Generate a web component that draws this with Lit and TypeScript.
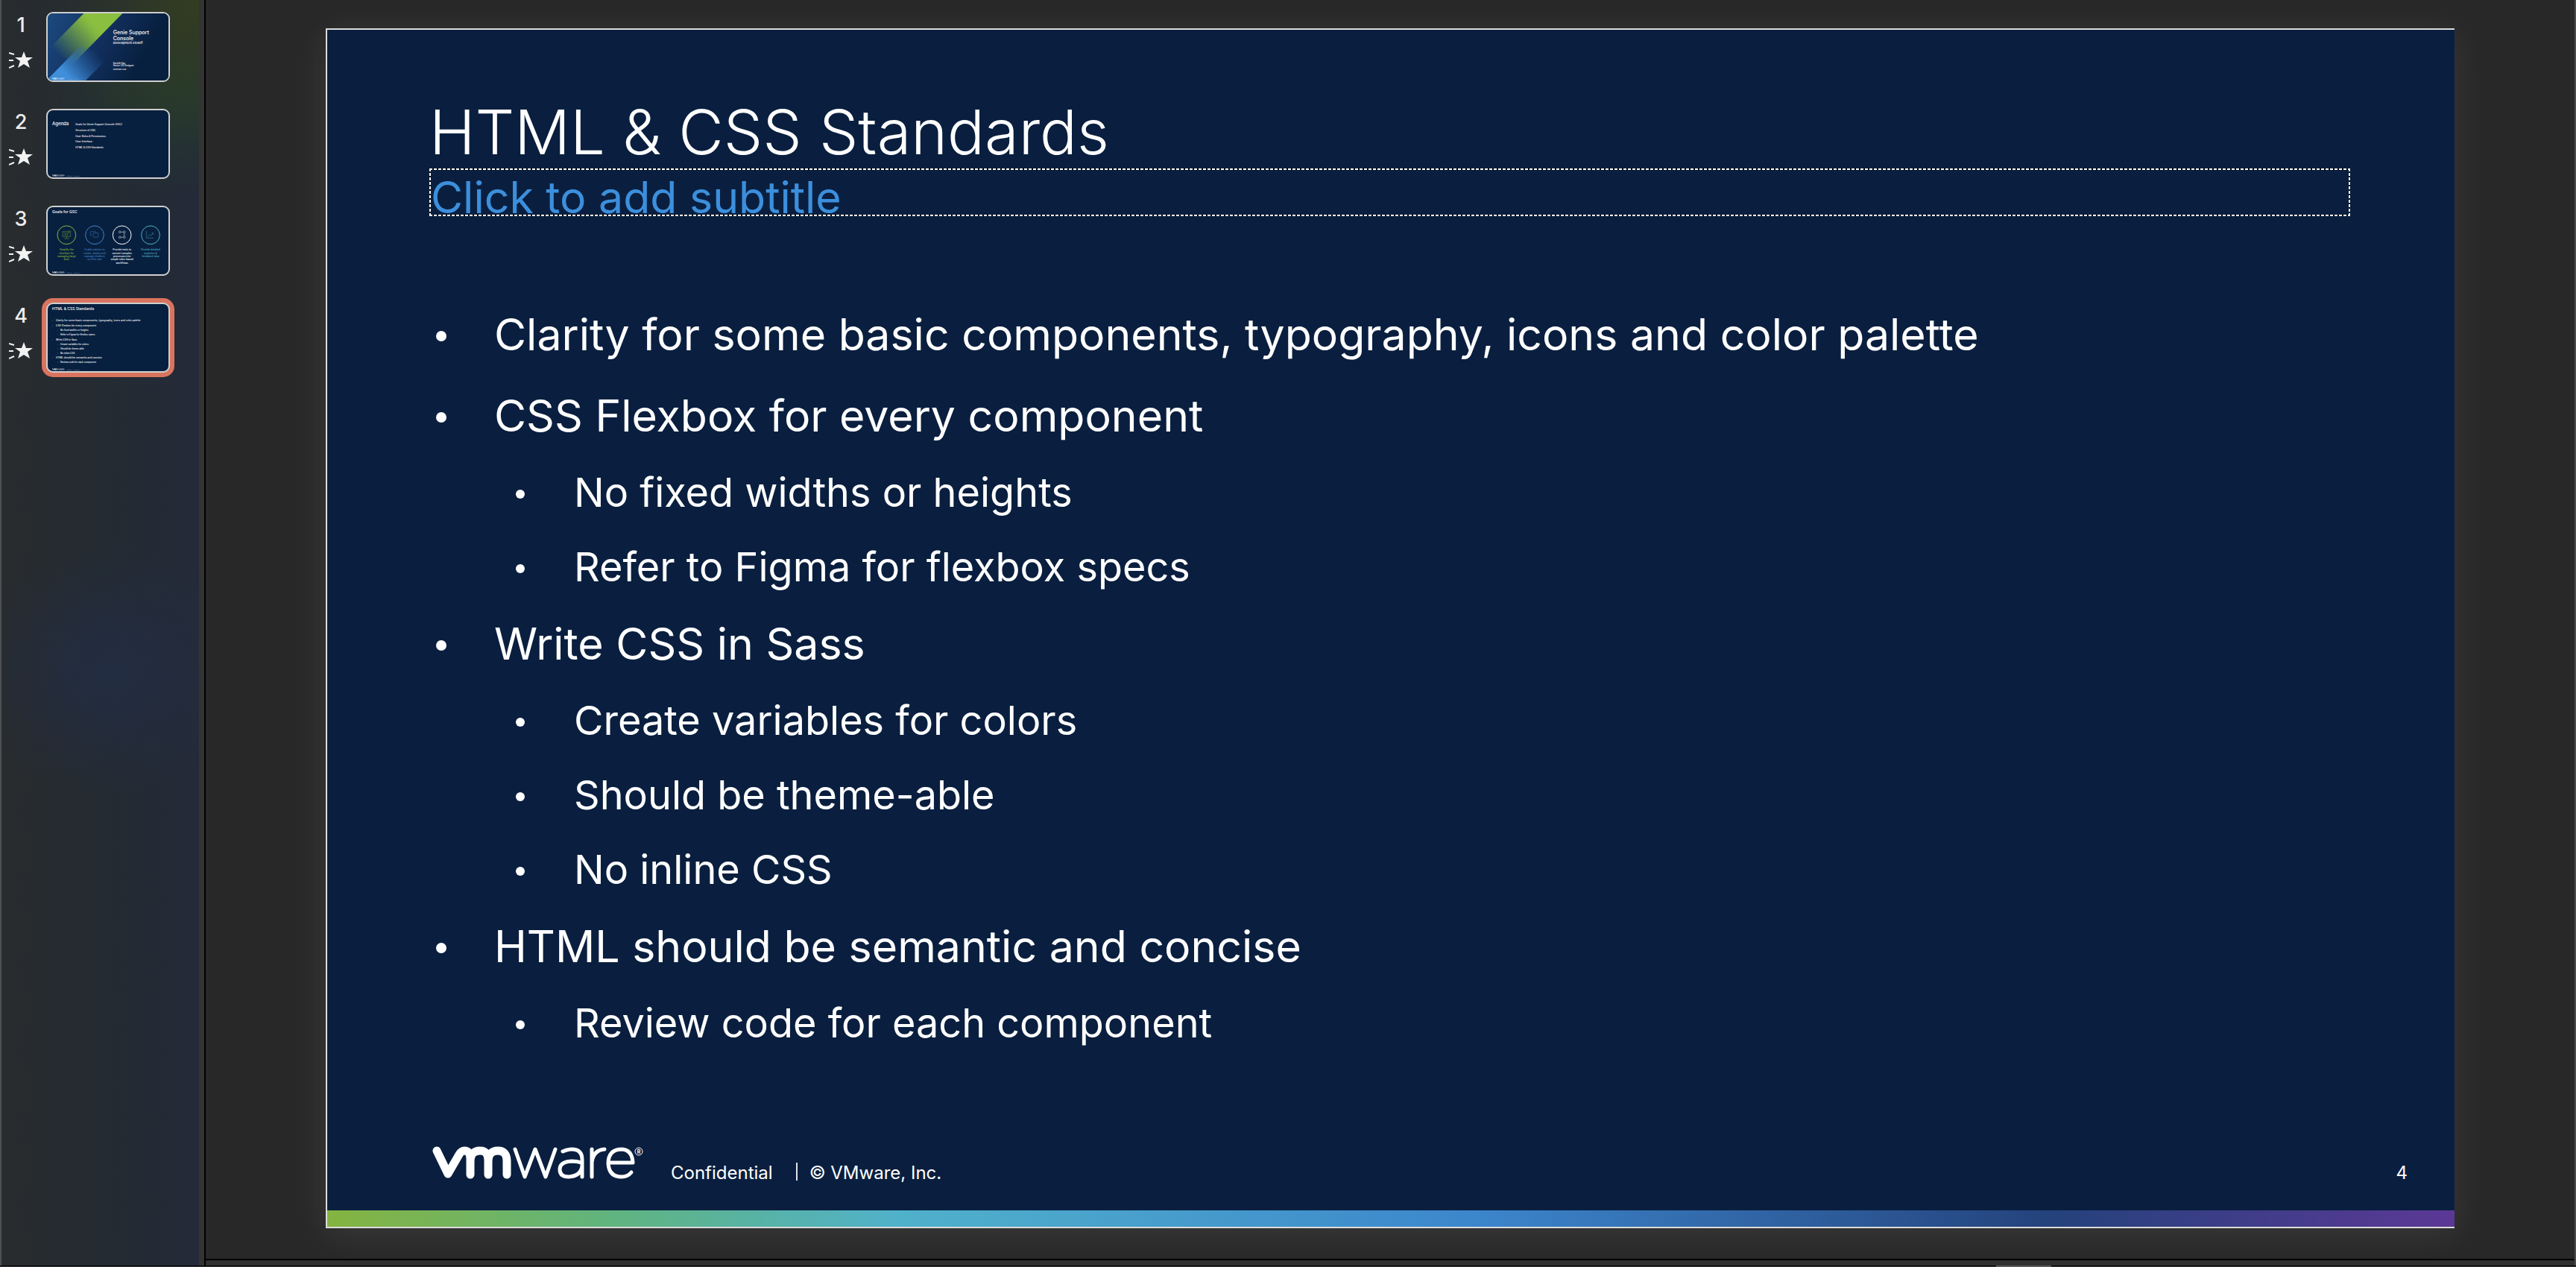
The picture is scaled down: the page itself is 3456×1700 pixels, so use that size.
import { LitElement, html, css, svg, nothing } from "lit";
import { customElement, property, state } from "lit/decorators.js";

interface Bullet {
  text: string;
  children?: string[];
}

const BULLETS: Bullet[] = [
  { text: "Clarity for some basic components, typography, icons and color palette" },
  {
    text: "CSS Flexbox for every component",
    children: ["No fixed widths or heights", "Refer to Figma for flexbox specs"],
  },
  {
    text: "Write CSS in Sass",
    children: ["Create variables for colors", "Should be theme-able", "No inline CSS"],
  },
  {
    text: "HTML should be semantic and concise",
    children: ["Review code for each component"],
  },
];

/* Strokes of the wordmark on a 286 x 52 canvas. */
const wordmark = () => svg`
  <g fill="none" stroke="#fff" stroke-linecap="round" stroke-linejoin="round">
    <path stroke-width="11" d="M7 13 L22 44 L37 18 Q40 13 44 13 Q52 13 52 24 V45 M52 28 Q52 13 65 13 Q76 13 76 26 V45 M76 28 Q76 13 89 13 Q101 13 101 27 V45"/>
    <path stroke-width="5" d="M112 11 L125 48 L139 11 L153 48 L166 11"/>
    <path stroke-width="5" d="M176 14 Q182 11 188 11 Q202 11 202 25 V48 M201 29 Q195 27 188 27 Q172 28 172 38 Q172 48 184 48 Q200 47 202 34"/>
    <path stroke-width="5" d="M215 11 V48 M215 29 Q217 12 232 11"/>
    <path stroke-width="5" d="M237 29 H270 Q269 11 254 11 Q237 12 237 30 Q238 48 255 48 Q263 48 268 42"/>
  </g>`;

const thumbFooter = () => svg`
  <svg x="18" y="257" width="52" height="10" viewBox="0 0 286 52">${wordmark()}</svg>
  <text x="75" y="266" font-size="4" fill="#8fa0b8">Confidential</text>
  <text x="103" y="266" font-size="4" fill="#8fa0b8">© VMware, Inc.</text>`;

const coverArt = () => svg`
  <defs>
    <linearGradient id="sky" x1="0" y1="0" x2="1" y2="0.3">
      <stop offset="0" stop-color="#1d4a80"/><stop offset="0.5" stop-color="#12305f"/><stop offset="0.9" stop-color="#08203f"/>
    </linearGradient>
    <linearGradient id="green" gradientUnits="userSpaceOnUse" x1="200" y1="60" x2="60" y2="185">
      <stop offset="0" stop-color="#8bbf3f"/><stop offset="0.15" stop-color="#7fb242"/><stop offset="1" stop-color="#7fb242" stop-opacity="0"/>
    </linearGradient>
    <linearGradient id="blue" gradientUnits="userSpaceOnUse" x1="80" y1="250" x2="195" y2="150">
      <stop offset="0" stop-color="#3f8fda"/><stop offset="1" stop-color="#2c6bb0" stop-opacity="0"/>
    </linearGradient>
  </defs>
  <rect width="486" height="270" fill="url(#sky)"/>
  <path d="M145 0 H301 L98 207 L10 137 Z" fill="url(#green)"/>
  <path d="M0 265 L130 132 L250 172 L153 270 H0 Z" fill="url(#blue)"/>
  <g fill="#fff">
    <text x="263" y="84" font-size="21">Genie Support</text>
    <text x="263" y="108" font-size="21">Console</text>
    <text x="263" y="123" font-size="12">Development Kickoff</text>
    <text x="263" y="204" font-size="9">Karthik Das</text>
    <text x="263" y="213" font-size="9">Senior UX Designer</text>
    <text x="263" y="228" font-size="7">November 2019</text>
  </g>`;

const agendaArt = () => {
  const rows: [number, string][] = [
    [60, "Goals for Genie Support Console (GSC)"],
    [84, "Structure of GSC"],
    [108, "User Roles & Permissions"],
    [129, "User Interface"],
    [153, "HTML & CSS Standards"],
  ];
  return svg`
    <g fill="#fff">
      <text x="18" y="60" font-size="18">Agenda</text>
      ${rows.map(([y, t]) => svg`<text x="112" y=${y} font-size="10">${t}</text>`)}
    </g>`;
};

const goalsArt = () => {
  const goals: [number, string, string[]][] = [
    [76, "#86b93f", ["Simplify the", "interface for", "managing large", "bots"]],
    [189, "#3d84cc", ["Enable admins to", "create, deploy and", "manage chatbots", "on their own"]],
    [299, "#ffffff", ["Provide tools to", "convert complex", "processes into", "simple rules-based", "workflows"]],
    [414, "#4fb0c6", ["Provide detailed", "analytics &", "feedback data"]],
  ];
  return svg`
    <text x="18" y="24" font-size="15" fill="#fff">Goals for GSC</text>
    ${goals.map(
      ([x, color, lines]) => svg`
        <circle cx=${x} cy="112" r="37" fill="none" stroke=${color} stroke-width="3"/>
        <g fill=${color} font-size="10" text-anchor="middle">
          ${lines.map((t, i) => svg`<text x=${x} y=${175 + i * 13}>${t}</text>`)}
        </g>`
    )}
    <g fill="none" stroke-width="2">
      <g stroke="#5f8a3a">
        <path d="M60 98 H84 M92 108 V118 H60 V98 M76 118 V126 M66 126 H86 M84 96 H92 V104 H84 Z M64 104 H70 M64 112 H70"/>
        <circle cx="76" cy="108" r="5"/>
      </g>
      <path stroke="#2d62a0" d="M178 114 H172 V98 H193 V104 M183 104 H204 V120 H198 L194 124 V120 H183 Z"/>
      <g stroke="#c3ccd8">
        <circle cx="290" cy="100" r="4"/><circle cx="308" cy="100" r="4"/>
        <circle cx="290" cy="121" r="4"/><circle cx="308" cy="121" r="4"/>
        <path d="M294 100 H304 M308 104 V117 M294 121 H304"/>
      </g>
      <path stroke="#3c8098" d="M397 96 V124 H426 M402 118 L411 111 L416 114 L425 104 M419 104 H425 V110"/>
    </g>`;
};

const standardsArt = () => {
  const rows: [number, number, string][] = [
    [0, 69, "Clarity for some basic components, typography, icons and color palette"],
    [0, 90, "CSS Flexbox for every component"],
    [1, 108, "No fixed widths or heights"],
    [1, 126, "Refer to Figma for flexbox specs"],
    [0, 147, "Write CSS in Sass"],
    [1, 165, "Create variables for colors"],
    [1, 183, "Should be theme-able"],
    [1, 201, "No inline CSS"],
    [0, 219, "HTML should be semantic and concise"],
    [1, 237, "Review code for each component"],
  ];
  return svg`
    <g fill="#fff">
      <text x="18" y="24" font-size="15">HTML &amp; CSS Standards</text>
      ${rows.map(
        ([level, y, t]) => svg`
          <circle cx=${20 + level * 20} cy=${y - 3} r="1"/>
          <text x=${33 + level * 18} y=${y} font-size=${level ? 9 : 10}>${t}</text>`
      )}
    </g>`;
};

const SLIDES = [
  { title: "Genie Support Console", art: coverArt },
  { title: "Agenda", art: agendaArt },
  { title: "Goals for GSC", art: goalsArt },
  { title: "HTML & CSS Standards", art: standardsArt },
];

@customElement("slide-navigator")
export class SlideNavigator extends LitElement {
  @property({ type: Number }) current = 4;

  static styles = css`
    :host {
      display: block;
      box-sizing: border-box;
      border-left: 2px solid #4d5154;
      border-right: 2px solid #000;
      background: #333;
      padding-right: 7px;
    }
    .panel {
      min-height: 100%;
      box-sizing: border-box;
      padding-top: 16px;
      background:
        radial-gradient(ellipse 200px 200px at 100% 0, #333d20 0, #333d2000 100%),
        radial-gradient(ellipse 180px 140px at 90% 120px, #24392f 0, #24392f00 100%),
        radial-gradient(ellipse 190px 170px at 55% 900px, #232d42 0, #232d4200 100%),
        linear-gradient(90deg, #292c2e 0, #242b32 50%, #242a38 100%);
    }
    .list {
      list-style: none;
      margin: 0;
      padding: 0;
      display: flex;
      flex-direction: column;
      gap: 36px;
    }
    .item {
      display: flex;
      width: 100%;
      padding: 0;
      border: 0;
      background: none;
      color: #eee;
      font: 500 27px/32px Inter, "Liberation Sans", sans-serif;
      text-align: center;
      cursor: pointer;
    }
    .meta {
      display: flex;
      flex-direction: column;
      gap: 18px;
      width: 60px;
      padding-top: 2px;
    }
    .number {
      width: 52px;
    }
    .anim {
      display: block;
      width: 34px;
      height: 24px;
      margin-left: 10px;
    }
    .thumb {
      display: block;
      box-sizing: border-box;
      width: 166px;
      height: 94px;
      border: 2px solid #cfcfcf;
      border-radius: 9px;
      background: #08203f;
      overflow: hidden;
    }
    .thumb.selected {
      box-shadow: 0 0 0 6px #d9745e;
    }
    .art {
      display: block;
      width: 100%;
      height: 100%;
      font-family: Inter, "Liberation Sans", sans-serif;
    }
  `;

  private pick(n: number) {
    this.dispatchEvent(new CustomEvent("slide-pick", { detail: n }));
  }

  render() {
    return html`
      <nav class="panel" aria-label="Slides">
        <ol class="list">
          ${SLIDES.map(
            (s, i) => html`
              <li>
                <button
                  class="item"
                  aria-label=${`Slide ${i + 1}: ${s.title}`}
                  aria-current=${i + 1 === this.current ? "true" : nothing}
                  @click=${() => this.pick(i + 1)}
                >
                  <span class="meta">
                    <span class="number">${i + 1}</span>
                    <svg class="anim" viewBox="0 0 34 24" aria-hidden="true">
                      <path fill="#f2f2f2" d="M20 1 L23 9 H32 L25 14 L28 23 L20 18 L12 23 L15 14 L8 9 H17 Z" />
                      <path stroke="#f2f2f2" stroke-width="2" d="M0 3 L7 5 M0 13 H6 M0 23 L7 20" />
                    </svg>
                  </span>
                  <span class="thumb ${i + 1 === this.current ? "selected" : ""}">
                    <svg class="art" viewBox="0 0 486 270" preserveAspectRatio="none" aria-hidden="true">
                      ${s.art()}${thumbFooter()}
                    </svg>
                  </span>
                </button>
              </li>
            `
          )}
        </ol>
      </nav>
    `;
  }
}

@customElement("slide-canvas")
export class SlideCanvas extends LitElement {
  @property({ type: Number }) page = 4;
  @state() private subtitle = "";

  static styles = css`
    :host {
      display: flex;
      flex-direction: column;
      box-sizing: border-box;
      border: 2px solid #dcdcdc;
      border-right: 0;
      background: #0a1f3f;
      color: #fff;
      box-shadow: 0 8px 44px #ffffff16;
      font-family: Inter, "Liberation Sans", sans-serif;
    }
    .head {
      padding: 88px 140px 0 137px;
    }
    .title {
      margin: 0;
      font-size: 83px;
      line-height: 98px;
      font-weight: 300;
    }
    .subtitle {
      display: block;
      height: 64px;
      box-sizing: border-box;
      padding: 2px;
      background:
        repeating-linear-gradient(90deg, #fff 0 4px, #000 4px 6px) top / 100% 2px no-repeat,
        repeating-linear-gradient(90deg, #fff 0 4px, #000 4px 6px) bottom / 100% 2px no-repeat,
        repeating-linear-gradient(0deg, #fff 0 4px, #000 4px 6px) left / 2px 100% no-repeat,
        repeating-linear-gradient(0deg, #fff 0 4px, #000 4px 6px) right / 2px 100% no-repeat;
    }
    .subtitle input {
      display: block;
      width: 100%;
      height: 74px;
      box-sizing: border-box;
      padding: 0;
      border: 0;
      outline: 0;
      background: none;
      color: #3c8fdc;
      font: 400 59px/74px Inter, "Liberation Sans", sans-serif;
    }
    .subtitle input::placeholder {
      color: #3c8fdc;
      opacity: 1;
    }
    .bullets,
    .sub {
      list-style: none;
      margin: 0;
      padding: 0;
    }
    .bullets {
      flex: 1;
      padding: 124px 140px 0 146px;
      font-size: 59px;
      line-height: 70px;
    }
    .entry {
      padding-bottom: 39px;
    }
    .entry.group {
      padding-bottom: 33px;
    }
    .row {
      display: flex;
      align-items: center;
      gap: 64px;
    }
    .row::before {
      content: "";
      flex: none;
      width: 14px;
      height: 14px;
      margin-top: 4px;
      border-radius: 50%;
      background: #fff;
    }
    .sub {
      display: flex;
      flex-direction: column;
      gap: 30px;
      padding: 33px 0 0 107px;
      font-size: 54px;
    }
    .sub .row {
      gap: 66px;
    }
    .sub .row::before {
      width: 12px;
      height: 12px;
    }
    .foot {
      display: flex;
      align-items: flex-end;
      padding: 0 63px 34px 140px;
      font-size: 24px;
      line-height: 32px;
    }
    .logo {
      width: 286px;
      height: 52px;
      margin: 0 35px 7px 0;
    }
    .owner {
      margin-left: 31px;
      padding-left: 18px;
      background: linear-gradient(#dfe4ea, #dfe4ea) 0 2px / 2px 24px no-repeat;
    }
    .page {
      margin-left: auto;
    }
    .rule {
      height: 22px;
      background: linear-gradient(90deg, #84b440 0, #5fb482 14%, #50b1cb 27%, #3c86cc 54%, #24427c 81%, #5c3896 100%);
    }
  `;

  render() {
    return html`
      <header class="head">
        <h1 class="title">HTML &amp; CSS Standards</h1>
        <label class="subtitle">
          <input
            type="text"
            placeholder="Click to add subtitle"
            aria-label="Subtitle"
            .value=${this.subtitle}
            @input=${(e: InputEvent) => (this.subtitle = (e.target as HTMLInputElement).value)}
          />
        </label>
      </header>
      <ul class="bullets">
        ${BULLETS.map(
          (b) => html`
            <li class="entry ${b.children ? "group" : ""}">
              <div class="row">${b.text}</div>
              ${b.children
                ? html`<ul class="sub">
                    ${b.children.map((c) => html`<li class="row">${c}</li>`)}
                  </ul>`
                : nothing}
            </li>
          `
        )}
      </ul>
      <footer class="foot">
        <svg class="logo" viewBox="0 0 286 52" role="img" aria-label="VMware">
          ${wordmark()}
          <circle cx="278" cy="14" r="5" fill="none" stroke="#fff" />
          <text x="278" y="17" font-size="7" font-weight="700" text-anchor="middle" fill="#fff">R</text>
        </svg>
        <span>Confidential</span>
        <span class="owner">© VMware, Inc.</span>
        <span class="page">${this.page}</span>
      </footer>
      <div class="rule"></div>
    `;
  }
}

@customElement("app-root")
export class AppRoot extends LitElement {
  @state() private current = 4;

  static styles = css`
    :host {
      display: flex;
      flex-direction: column;
      min-height: 100vh;
      box-sizing: border-box;
      background: #282828;
    }
    .work {
      flex: 1;
      display: grid;
      grid-template-columns: 276px 1fr;
    }
    .main {
      display: flex;
      flex-direction: column;
      border-right: 2px solid #4a4a4a;
      min-width: 0;
    }
    .stage {
      flex: 1;
      display: flex;
      flex-direction: column;
      padding: 38px 161px 41px;
    }
    slide-canvas {
      flex: 1;
    }
    .splitter {
      height: 7px;
      border-top: 2px solid #000;
      background: #303030;
    }
    .notes {
      display: grid;
      grid-template-columns: 31fr 9fr;
      height: 2px;
      box-sizing: border-box;
      border-top: 1px solid #000;
      background: #3a3a3a;
    }
    .grip {
      grid-column: 2;
      width: 74px;
      height: 2px;
      margin-top: -1px;
      background: #5a5a5a;
    }
  `;

  render() {
    return html`
      <div class="work">
        <slide-navigator
          .current=${this.current}
          @slide-pick=${(e: CustomEvent<number>) => (this.current = e.detail)}
        ></slide-navigator>
        <main class="main">
          <div class="stage"><slide-canvas .page=${this.current}></slide-canvas></div>
          <div class="splitter"></div>
        </main>
      </div>
      <div class="notes"><div class="grip"></div></div>
    `;
  }
}
